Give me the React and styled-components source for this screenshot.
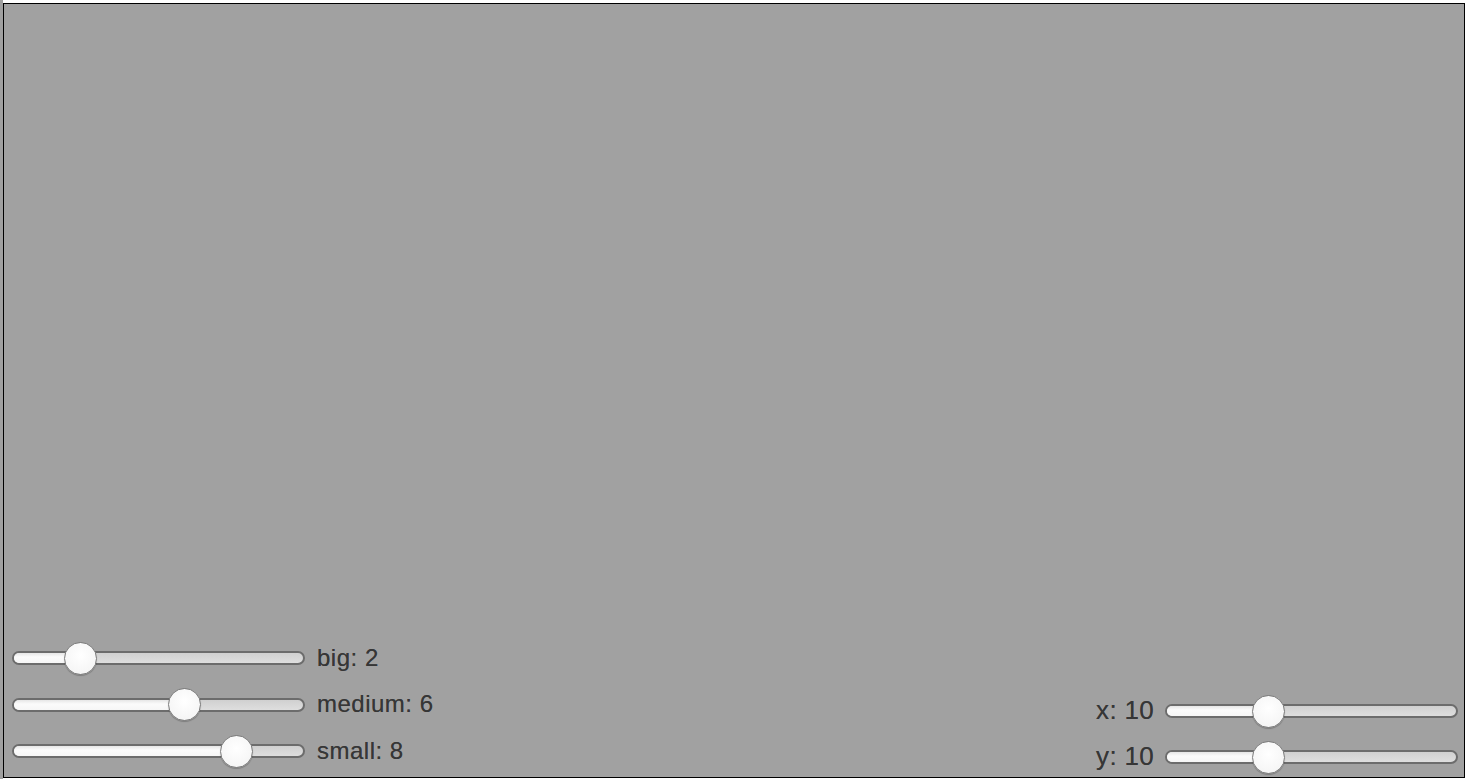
import React from "react";
import styled, { createGlobalStyle } from "styled-components";

const Global = createGlobalStyle`
  html, body { margin: 0; padding: 0; background: #ffffff; }
  body { font-family: "Liberation Sans", Arial, sans-serif; overflow: hidden; }
`;

const Page = styled.div`
  display: flex;
  width: 1468px;
  height: 779px;
  padding-top: 3px;
  box-sizing: border-box;
`;

const Gutter = styled.div`
  width: 3px;
  margin-top: -3px;
  background: #a0a0a0;
  flex: none;
`;

const Canvas = styled.div`
  width: 1462px;
  height: 775px;
  box-sizing: border-box;
  border: 1px solid #000000;
  background: #a1a1a1;
  display: flex;
  align-items: flex-end;
  justify-content: space-between;
  padding: 0 6px 6px 8px;
`;

const Column = styled.div`
  display: flex;
  flex-direction: column;
  gap: ${(p) => p.$gap}px;
  margin-bottom: ${(p) => p.$drop}px;
`;

const Row = styled.div`
  display: flex;
  align-items: center;
  height: 40px;
  gap: ${(p) => p.$gap}px;
`;

const Label = styled.span`
  font-family: "Liberation Sans", Arial, sans-serif;
  font-size: ${(p) => p.$size}px;
  letter-spacing: ${(p) => p.$spacing}px;
  color: #363636;
  white-space: nowrap;
  margin-top: -1px;
  text-shadow: 0 0 0.6px rgba(40, 40, 40, 0.6);
`;

const Track = styled.div`
  position: relative;
  width: 293px;
  height: 14px;
  box-sizing: border-box;
  border: 2px solid #6c6c6c;
  border-radius: 7px;
  background: linear-gradient(#d0d0d0, #dedede);
  flex: none;
`;

const Fill = styled.div`
  height: 100%;
  border-radius: 5px 0 0 5px;
  background: linear-gradient(#e6e6e6, #fbfbfb 40%, #f6f6f6);
`;

const Thumb = styled.div`
  position: absolute;
  top: 50%;
  width: 33px;
  height: 33px;
  margin-left: -16.5px;
  margin-top: -16.5px;
  box-sizing: border-box;
  border-radius: 50%;
  border: 1px solid #7c7c7c;
  background: radial-gradient(circle at 50% 40%, #ffffff, #f6f6f6 70%, #ececec);
  box-shadow: 0 1px 1px rgba(0, 0, 0, 0.22);
`;

function Slider({ value, max }) {
  const center = 14 + (value / max) * 261;
  return (
    <Track>
      <Fill style={{ width: `${center}px` }} />
      <Thumb style={{ left: `${center}px` }} />
    </Track>
  );
}

export default function App() {
  const left = [
    { name: "big", value: 2 },
    { name: "medium", value: 6 },
    { name: "small", value: 8 },
  ];
  const right = [
    { name: "x", value: 10 },
    { name: "y", value: 10 },
  ];
  return (
    <>
      <Global />
      <Page>
        <Gutter />
        <Canvas>
          <Column $gap={6.5} $drop={0}>
            {left.map((s) => (
              <Row key={s.name} $gap={12}>
                <Slider value={s.value} max={10} />
                <Label $size={24} $spacing={0.5}>
                  {s.name}: {s.value}
                </Label>
              </Row>
            ))}
          </Column>
          <Column $gap={6} $drop={-6}>
            {right.map((s) => (
              <Row key={s.name} $gap={11}>
                <Label $size={26} $spacing={0.3}>
                  {s.name}: {s.value}
                </Label>
                <Slider value={s.value} max={30} />
              </Row>
            ))}
          </Column>
        </Canvas>
      </Page>
    </>
  );
}
